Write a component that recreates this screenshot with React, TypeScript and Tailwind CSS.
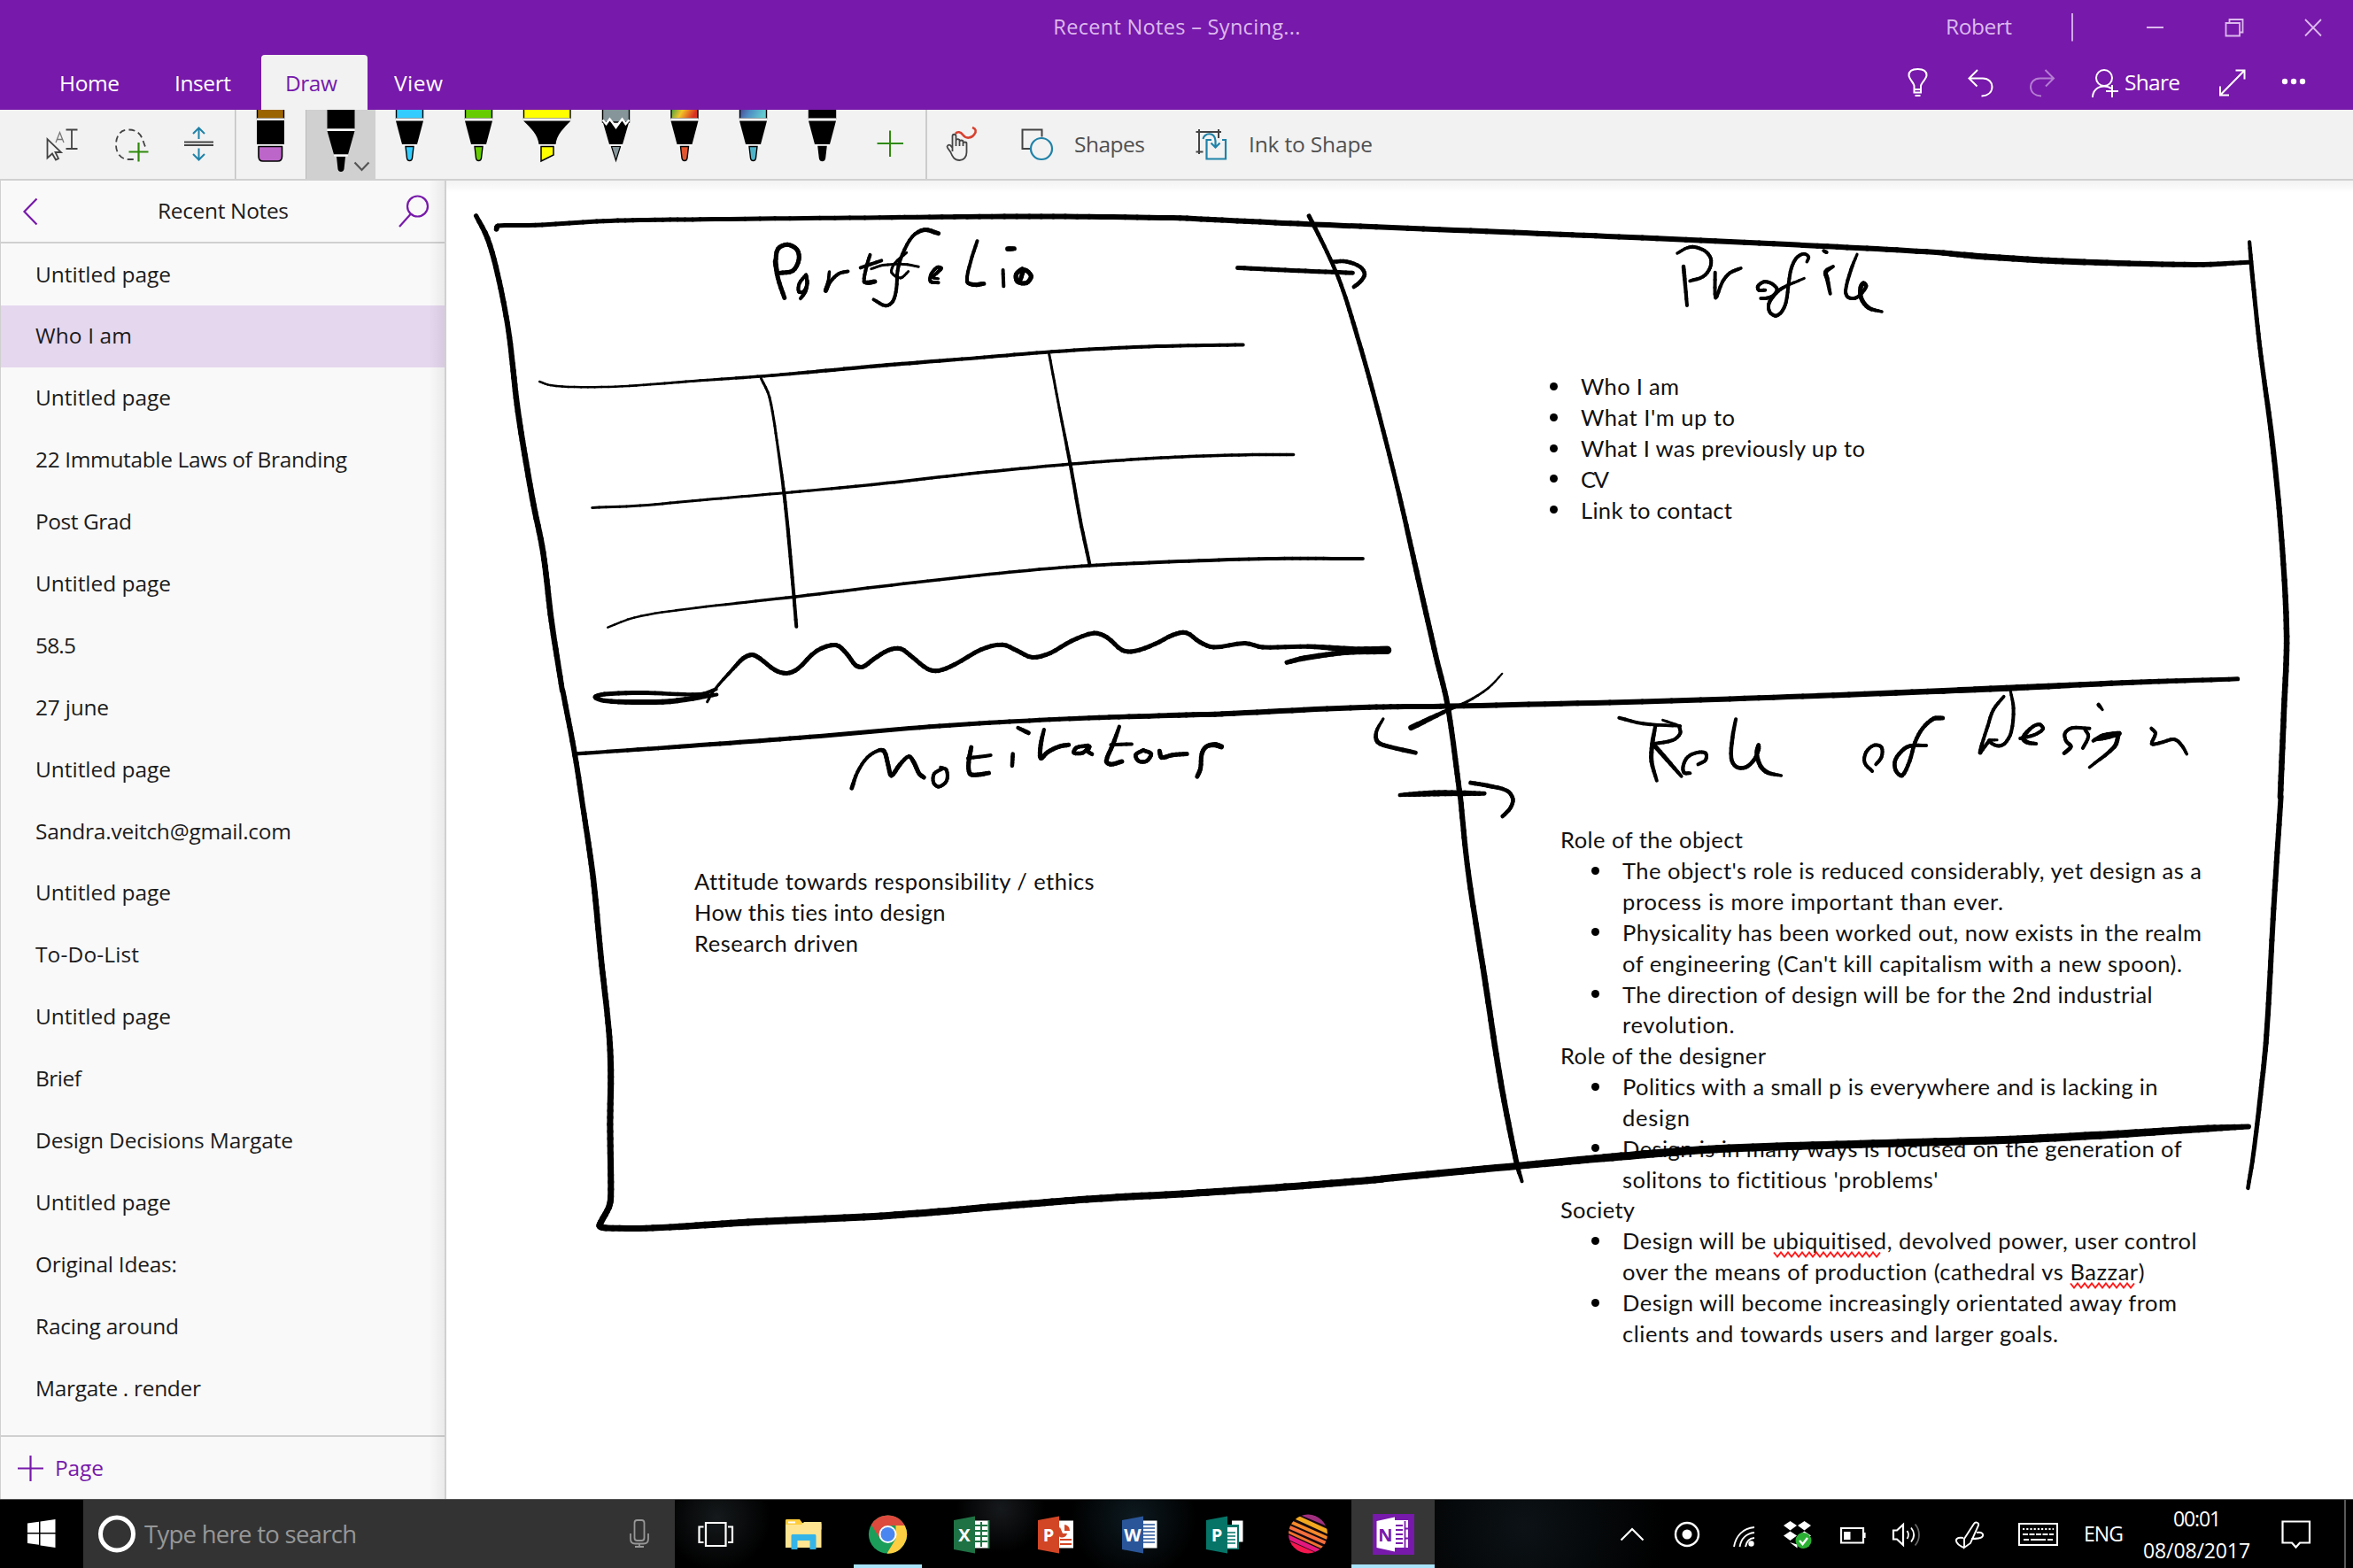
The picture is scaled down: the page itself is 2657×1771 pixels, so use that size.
import React, { useLayoutEffect, useRef } from "react";

/* ---------- helpers ---------- */

// Text whose tracking is adjusted so that it fills a given width.
function Fit({ w, children, className = "" }: { w: number; children: React.ReactNode; className?: string }) {
  const ref = useRef<HTMLSpanElement>(null);
  useLayoutEffect(() => {
    const el = ref.current;
    if (!el) return;
    el.style.letterSpacing = "0px";
    const natural = el.getBoundingClientRect().width;
    const n = (el.textContent ?? "").length;
    if (n > 1) el.style.letterSpacing = `${((w + 2 - natural) / (n - 1)).toFixed(3)}px`;
  }, [w]);
  return (
    <span ref={ref} className={`-ml-px inline-block whitespace-nowrap ${className}`}>
      {children}
    </span>
  );
}

// An icon cell: the viewBox uses window coordinates.
function Cell({ x, y, w, h, children, className = "" }: { x: number; y: number; w: number; h: number; children: React.ReactNode; className?: string }) {
  return (
    <svg width={w} height={h} viewBox={`${x} ${y} ${w} ${h}`} fill="none" className={`block shrink-0 ${className}`}>
      {children}
    </svg>
  );
}

/* ---------- title bar ---------- */

function TitleBar() {
  return (
    <header className="h-[124px] shrink-0 bg-[#7719aa] text-white text-[24.5px]">
      <div className="relative flex h-[62px] items-center justify-end text-[#dcb9ee]">
        <div className="absolute inset-0 flex items-center justify-center pl-[2px] text-[23.5px]">
          <Fit w={277}>Recent Notes – Syncing...</Fit>
        </div>
        <div className="w-[122px] pb-px">
          <Fit w={73}>Robert</Fit>
        </div>
        <Cell x={2320} y={0} w={337} h={62}>
          <g stroke="#dcb9ee" strokeWidth="1.8">
            <path d="M2340 15V46.500M2424 31h19M2513.500 26h15.500v14.500h-15.500zM2517.500 26v-4h15v14.500h-3.500M2603 22l18 18.500M2621 22l-18 18.500" />
          </g>
        </Cell>
      </div>
      <div className="flex h-[62px]">
        <div className="w-[198px] pl-[68px] pt-[14px]">
          <Fit w={66}>Home</Fit>
        </div>
        <div className="w-[97px] pt-[14px]">
          <Fit w={62}>Insert</Fit>
        </div>
        <div className="w-[120px] rounded-t-[4px] bg-[#f2f2f2] pl-[28px] pt-[14px] text-[#7719aa]">
          <Fit w={57}>Draw</Fit>
        </div>
        <div className="pl-[31px] pt-[14px]">
          <Fit w={53}>View</Fit>
        </div>
        <div className="ml-auto flex">
          <Cell x={2130} y={62} w={270} h={62}>
            <g stroke="#fff" strokeWidth="2">
              <path d="M2161.500 101v-4c0-3-6-8-6-12 0-4.500 4-7 10-7s10 2.500 10 7c0 4-6.500 9-6.500 12v4zM2161.500 101h7.500v3.500h-7.500zM2162.500 108h6" />
              <path d="M2233 79l-9.500 9.500 9 9M2223.500 88.500h15.500c7 0 10.500 5 10.500 9.500 0 6-4.500 10-12 10.500" />
              <g stroke="#b57dd3">
                <path d="M2309.500 79l9.500 9.500-9 9M2319 88.500h-15.500c-7 0-10.500 5-10.500 9.500 0 6 4.500 10 12 10.500" />
              </g>
              <circle cx="2376" cy="88" r="9" />
              <path d="M2363 110c0-7 5-12.500 13-12.500 3 0 6 .800 8 2.500M2385 96v14M2378 103h14" />
            </g>
          </Cell>
          <div className="w-[61px] pt-[13px]">
            <Fit w={61}>Share</Fit>
          </div>
          <Cell x={2461} y={62} w={196} h={62}>
            <path d="M2507 107.500L2534.500 79.500M2524.500 79.500h10v10M2507 97.500v10h10" stroke="#fff" strokeWidth="2" />
            <g fill="#fff">
              <circle cx="2580" cy="92" r="3.200" />
              <circle cx="2590" cy="92" r="3.200" />
              <circle cx="2600" cy="92" r="3.200" />
            </g>
          </Cell>
        </div>
      </div>
    </header>
  );
}

/* ---------- drawing ribbon ---------- */

function Pen({ x, c, barrel, tip }: { x: number; c: number; barrel: string; tip: string }) {
  return (
    <Cell x={x} y={124} w={78} h={78}>
      <rect x={c - 15} y={118} width="30" height="16" fill={barrel} stroke="#000" strokeWidth="1.400" />
      <path d={`M${c - 15.500} 133.500h31v3h-31z`} fill="#fff" />
      <path d={`M${c - 15.500} 136.500h31l-7 26.500h-17z`} fill="#000" />
      <path d={`M${c - 8.500} 163h17v2.500h-17z`} fill="#fff" />
      <path d={`M${c - 4.500} 165.500h9l-1.500 13c-.400 4-5.600 4-6 0z`} fill={tip} stroke="#000" strokeWidth="1.400" />
    </Cell>
  );
}

function Ribbon() {
  return (
    <div className="flex h-[80px] shrink-0 border-b-2 border-[#d0d0d0] bg-[#f2f2f2] text-[24.5px] text-[#505050]">
      <Cell x={0} y={124} w={265} h={78}>
        <g stroke="#444" strokeWidth="1.8">
          <path d="M53.500 157v21.500l5.500-5 4 7 3-1.500-3.500-7h6.500z" />
          <path d="M63 161l4.500-11.500 4.500 11.500M64.500 157.500h6" strokeWidth="1.300" stroke="#777" />
          <path d="M81 146.500v21.500M74.500 146.500h13M74.500 168h13" />
          <path d="M164 165.500c-3-6-3.500-19-19-19-10 0-14 8-14 17 0 10 6 16.500 14 16.500h6" strokeDasharray="7 4" />
          <path d="M208 160.500h33M208 164h33" strokeWidth="2" />
        </g>
        <path d="M156.500 161v21.500M145.500 171.500H167.500" stroke="#2f8a0b" strokeWidth="2.200" />
        <path d="M224.500 157v-12M218 151l6.500-6.500 6.500 6.500M224.500 167.500v12M218 174l6.500 6.500 6.500-6.500" stroke="#1f82a8" strokeWidth="2" />
      </Cell>
      <Cell x={265} y={124} w={80} h={78}>
        <path d="M265.700 124v78" stroke="#c2c2c2" strokeWidth="1.600" />
        <rect x="290.500" y="118" width="30" height="16" fill="#9b6400" stroke="#000" strokeWidth="1.400" />
        <path d="M290 136h31v27h-31z" fill="#000" />
        <path d="M290 133.500h31v2.500h-31zM290 163h31v2.500h-31z" fill="#fff" />
        <path d="M292 165.500h26.500v11c0 4-2 5.500-5 5.500h-16.500c-3 0-5-1.500-5-5.500z" fill="#bd66c9" stroke="#000" strokeWidth="1.600" />
      </Cell>
      <Cell x={345} y={124} w={79} h={78} className="bg-[#d0d0d0]">
        <path d="M345.500 124v78" stroke="#bbb" />
        <path d="M369.500 124h31v21.500h-31zM369.500 148h31l-7.500 26.500h-16zM380 177h10l-1.500 14c-.500 4-6.500 4-7 0z" fill="#000" />
        <path d="M369.500 145.500h31v2.500h-31zM377 174.500h16v2h-16z" fill="#fff" />
        <path d="M400.500 183.500l8 8.500 8-8.500" stroke="#555" strokeWidth="2.200" />
      </Cell>
      <Pen x={424} c={462.500} barrel="#33ccff" tip="#33ccff" />
      <Pen x={502} c={540.500} barrel="#66cc00" tip="#66cc00" />
      <Cell x={580} y={124} w={77} h={78}>
        <rect x="591.500" y="118" width="52.500" height="16" fill="#ffff00" stroke="#000" strokeWidth="1.400" />
        <path d="M591 133.500h53.500v3h-53.500z" fill="#fff" />
        <path d="M591 136.500h53.500c-8 8-16 16-17 26.500h-19c-1-10.500-9-18.500-17.500-26.500z" fill="#000" />
        <path d="M608 163h20v2.500h-20z" fill="#fff" />
        <path d="M611 165.500h14v9.500l-14 7z" fill="#ffff00" stroke="#000" strokeWidth="1.500" />
      </Cell>
      <Cell x={657} y={124} w={77} h={78}>
        <path d="M680.500 120h30v18h-30z" fill="#859599" stroke="#000" strokeWidth="1.400" />
        <path d="M680.500 137l3.500 2.500 4-4 3.500 4 4 4 4-4 3.500-4 4 4 3.500-2.500-7.500 26h-15z" fill="#000" />
        <path d="M680.500 135.500l4 4.500 4-5.500 3.500 4.500 3.500 5 3.500-5 3.500-4.500 4 5.500 4-4.500" stroke="#fff" strokeWidth="2.400" />
        <path d="M687.500 163h16v2.500h-16z" fill="#fff" />
        <path d="M690.500 165.500h10l-5 16z" fill="#859599" stroke="#000" strokeWidth="1.200" />
      </Cell>
      <svg width="0" height="0" className="absolute">
        <defs>
          <linearGradient id="rainbow" x1="0" y1="0" x2="1" y2=".3">
            <stop offset="0" stopColor="#1f9a48" />
            <stop offset=".5" stopColor="#f3c52b" />
            <stop offset="1" stopColor="#d9301f" />
          </linearGradient>
          <linearGradient id="galaxy" x1="0" y1="0" x2="1" y2=".3">
            <stop offset="0" stopColor="#4b3a86" />
            <stop offset=".5" stopColor="#4f8fc4" />
            <stop offset="1" stopColor="#63c9cf" />
          </linearGradient>
        </defs>
      </svg>
      <Pen x={734} c={773} barrel="url(#rainbow)" tip="#e2562f" />
      <Pen x={812} c={850.500} barrel="url(#galaxy)" tip="#4fb3c8" />
      <Pen x={890} c={928.500} barrel="#000" tip="#000" />
      <Cell x={968} y={124} w={246} h={78}>
        <path d="M1005 147.500v29.500M990.500 162h29.500" stroke="#2f8a0b" strokeWidth="2" />
        <path d="M1046 124v78" stroke="#c2c2c2" strokeWidth="1.600" />
        <path d="M1079 151c2-3 6-2 8 1 4 5.500 10 4 13 0 3-4 2-6.500-2-8" stroke="#d8412f" strokeWidth="2.600" />
        <path d="M1075.500 171v-17c0-3 4-3 4 0v11M1079.500 165v-6c0-2.500 4-2.500 4 0v6M1083.500 160c0-2 4-2 4 0v5M1087.500 162c0-2 4-2 4 0v10c0 5-3 9-8 9-6 0-8-4-10-9l-3.500-5c-1.500-2 1-4 3-3l2.500 3" stroke="#444" strokeWidth="1.8" />
        <path d="M1163 168h-8.500v-21.500h22v8" stroke="#444" strokeWidth="2" />
        <circle cx="1176" cy="168" r="12" stroke="#1f82a8" strokeWidth="2.200" />
      </Cell>
      <div className="w-[136px] pt-[21px]">
        <Fit w={78}>Shapes</Fit>
      </div>
      <Cell x={1350} y={124} w={61} h={78}>
        <path d="M1354 146v28M1350.500 149h28.500M1376 146v10M1350.500 171.500h8" stroke="#444" strokeWidth="2" />
        <path d="M1368 158h-5.500v21.500h21.500v-21.500h-4" stroke="#1f82a8" strokeWidth="2.200" />
        <path d="M1358.500 157c1-7 13-9 14 2v7M1367.500 161.500l5 5 5-5" stroke="#1f82a8" strokeWidth="2.200" />
      </Cell>
      <div className="pt-[21px]">
        <Fit w={138}>Ink to Shape</Fit>
      </div>
    </div>
  );
}

/* ---------- page list ---------- */

const pages: [string, number][] = [
  ["Untitled page", 151],
  ["Who I am", 107],
  ["Untitled page", 151],
  ["22 Immutable Laws of Branding", 350],
  ["Post Grad", 107],
  ["Untitled page", 151],
  ["58.5", 44],
  ["27 june", 81],
  ["Untitled page", 151],
  ["Sandra.veitch@gmail.com", 287],
  ["Untitled page", 151],
  ["To-Do-List", 115],
  ["Untitled page", 151],
  ["Brief", 50],
  ["Design Decisions Margate", 289],
  ["Untitled page", 151],
  ["Original Ideas:", 158],
  ["Racing around", 160],
  ["Margate . render", 185],
];

function Sidebar() {
  return (
    <aside className="relative flex w-[504px] shrink-0 flex-col border-l border-r-2 border-[#d0d0d0] bg-[#f9f9f9] text-[24.5px] text-[#1c1c1c]">
      <div className="flex h-[71px] items-center border-b-2 border-[#d0d0d0]">
        <Cell x={1} y={206} w={178} h={66}>
          <path d="M41.500 224.500L27.500 239l14 14.500" stroke="#7719aa" strokeWidth="2.200" />
        </Cell>
        <div className="w-[260px] pb-px">
          <Fit w={146}>Recent Notes</Fit>
        </div>
        <Cell x={439} y={206} w={60} h={66}>
          <path d="M463.500 242L451 256" stroke="#7719aa" strokeWidth="2.200" />
          <circle cx="471.500" cy="233" r="11.500" stroke="#7719aa" strokeWidth="2.200" />
        </Cell>
      </div>
      <ul className="flex-1">
        {pages.map(([name, w], i) => (
          <li key={i} className={`flex h-[69.9px] items-center pl-[40px] ${i === 1 ? "bg-[#e5d7ee]" : ""}`}>
            <Fit w={w}>{name}</Fit>
          </li>
        ))}
      </ul>
      <div className="flex h-[72px] items-center border-t-2 border-[#d0d0d0] pl-[19px] text-[#7719aa]">
        <svg width="29" height="29" viewBox="0 0 29 29" className="mr-[14px]">
          <path d="M14.500 0v29M0 14.500h29" stroke="#7719aa" strokeWidth="2.200" />
        </svg>
        <Fit w={53}>Page</Fit>
      </div>
      <div className="absolute inset-y-0 right-0 w-[18px] bg-linear-to-l from-black/6 to-transparent" />
    </aside>
  );
}

/* ---------- typed notes ---------- */

function Line({ w, bullet, indent, children }: { w: number; bullet?: boolean; indent?: boolean; children: React.ReactNode }) {
  return (
    <div className="flex h-[34.85px] items-center">
      {(bullet || indent) && (
        <span className="flex w-[70px] shrink-0 items-center pl-[34px]">{bullet && <span className="size-[9px] rounded-full bg-black" />}</span>
      )}
      <Fit w={w}>{children}</Fit>
    </div>
  );
}

function Misspelt({ children, w }: { children: React.ReactNode; w: number }) {
  const teeth = Math.floor(w / 8);
  return (
    <span className="relative">
      {children}
      <svg width={teeth * 8 + 2} height="9" className="absolute left-0 top-[27px]" fill="none">
        <path d={"M1 1.500" + "l4 5l4 -5".repeat(teeth)} stroke="#ff1a1a" strokeWidth="2" />
      </svg>
    </span>
  );
}

function Notes() {
  return (
    <div className="font-['Lato',sans-serif] text-[25.5px] text-[#111]">
      <div className="absolute left-[1212px] top-[215px]">
        <Line bullet w={109}>Who I am</Line>
        <Line bullet w={172}>What I'm up to</Line>
        <Line bullet w={319}>What I was previously up to</Line>
        <Line bullet w={30}>CV</Line>
        <Line bullet w={169}>Link to contact</Line>
      </div>
      <div className="absolute left-[281px] top-[774px]">
        <Line w={449}>Attitude towards responsibility / ethics</Line>
        <Line w={282}>How this ties into design</Line>
        <Line w={183}>Research driven</Line>
      </div>
      <div className="absolute left-[1259px] top-[727px]">
        <Line w={204}>Role of the object</Line>
        <Line bullet w={652}>The object's role is reduced considerably, yet design as a</Line>
        <Line indent w={428}>process is more important than ever.</Line>
        <Line bullet w={652}>Physicality has been worked out, now exists in the realm</Line>
        <Line indent w={630}>of engineering (Can't kill capitalism with a new spoon).</Line>
        <Line bullet w={597}>The direction of design will be for the 2nd industrial</Line>
        <Line indent w={125}>revolution.</Line>
        <Line w={230}>Role of the designer</Line>
        <Line bullet w={603}>Politics with a small p is everywhere and is lacking in</Line>
        <Line indent w={74}>design</Line>
        <Line bullet w={630}>Design is in many ways is focused on the generation of</Line>
        <Line indent w={355}>solitons to fictitious 'problems'</Line>
        <Line w={82}>Society</Line>
        <Line bullet w={647}>
          Design will be <Misspelt w={127}>ubiquitised</Misspelt>, devolved power, user control
        </Line>
        <Line indent w={588}>
          over the means of production (cathedral vs <Misspelt w={74}>Bazzar</Misspelt>)
        </Line>
        <Line bullet w={624}>Design will become increasingly orientated away from</Line>
        <Line indent w={490}>clients and towards users and larger goals.</Line>
      </div>
    </div>
  );
}

/* ---------- ink ---------- */

// Strokes are "x,y,width" lists; the width carries on until it is given again.
type Sheet = { x: number; y: number; sx: number; sy: number; strokes: string[] };

const sheets: Sheet[] = [
  {
    x: 520, y: 220, sx: 1.479, sy: 2.45,
    strokes: [
      "26,58,5 45,120,6 62,220 80,375 96,600,6.5 120,840 138,990 152,1180 170,1372,6",
      "60,95,6 62,86,5 125,84 250,72 400,68 700,63 950,60,6 1190,64 1272,70",
      "192,1547,4 400,1523,5 600,1498 800,1470 1000,1451 1200,1440,6 1272,1437",
      "526,188,5 530,150 546,138 562,152 565,180 555,210 532,217",
      "526,185,6 530,230,5 541,285",
      "577,222,4 566,245 565,268 573,268 579,245 577,222 579,245 576,268 568,287",
      "616,213,3.5 614,240 610,265,5 618,240,4 632,218 647,212",
      "684,166,4 678,200 674,240 682,243,5 692,240",
      "668,202,4 703,182",
      "798,107,5 775,97 755,115,4 738,165 730,210 728,260 722,295 710,307 690,290",
      "686,205,3 705,195 740,192 765,199",
      "745,160,3 725,190 720,215 735,230 748,212",
      "798,232,3 789,229 797,214,4 803,203 796,201 786,220 785,240 798,243",
      "863,128,4 852,185 846,240 858,249,5 874,246",
      "906,208,4 907,253",
      "914,150,6 925,149,5",
      "938,205,5 928,220 930,240 945,244 953,225 942,208 935,235",
      "1298,202,5 1400,210 1490,216",
      "1458,185,4.5 1480,185 1503,200 1510,220 1503,240 1492,255",
      "132,517,2.5 150,527 190,532 270,530 400,514,3 520,500,3.5 700,473,4.5 850,453,4 1000,433 1150,420 1307,415",
      "220,866,3 300,860 400,845 540,825 700,800,3.5 850,772 1020,745 1170,728 1300,720 1391,719",
      "246,1197,2.5 290,1170 360,1150 560,1112,3.5 800,1065 1000,1032 1150,1018,4 1350,1007 1507,1007",
      "502,508,3 516,560 530,700 542,850,4 552,1020 561,1195",
      "983,440,3 1000,590 1020,760,4 1035,900 1051,1025",
      "412,1403,3 424,1370 455,1312,4 472,1283,5 487,1273 500,1283 525,1315 545,1324 563,1312 595,1262 627,1246 645,1270 660,1302 672,1306 690,1285 715,1260 735,1256 755,1280 780,1312 798,1317 825,1300 870,1258 905,1245 930,1262 955,1280 985,1268 1020,1235 1058,1213 1080,1225 1105,1260 1125,1263 1160,1243 1190,1218 1212,1212 1235,1238 1258,1252 1310,1241 1340,1252 1415,1250,5 1500,1259,7 1548,1260,9",
      "1380,1294,5 1410,1282,6 1480,1266,6 1548,1260,9",
      "427,1368,4 400,1382 300,1378,5 240,1382 225,1390 240,1400 300,1404,6 350,1402 400,1390 428,1383,4",
    ],
  },
  {
    x: 1380, y: 220, sx: 1.2645, sy: 2.306,
    strokes: [
      "0,66,6 130,77 400,97 600,112 850,133 1020,150 1080,160,7 1200,173 1390,182,6 1465,176,5",
      "124,55,5 150,150,4.5 170,235 190,350,5 215,510 250,760 280,1000,6 305,1200 322,1330 340,1568",
      "1467,123,4 1470,190,5 1482,400 1500,650,6 1513,900 1520,1150,6.5 1516,1350 1511,1568",
      "0,1352,6 200,1335 322,1332 600,1320 850,1305 1120,1285,7 1300,1270,6 1450,1261,5",
      "400,1247,2 380,1285,2.5 350,1320,3 325,1340,4 270,1388,6.5",
      "230,1365,3 220,1400,4 222,1425,5 240,1438 276,1453",
    ],
  },
  {
    x: 1880, y: 265, sx: 3, sy: 3,
    strokes: [
      "63,108,4.5 67,150 75,240,4",
      "42,63,3.5 75,45 100,42,4 135,55 155,80 153,112 130,142 85,157",
      "170,128,4 172,214 195,160 220,130 257,114",
      "340,188,4 318,188 315,175 335,160 360,165 380,185 368,206 345,215 325,216",
      "481,92,3.5 487,75 470,65 445,80,4 428,115 420,160 410,230 395,262 375,275 355,262 352,235 370,205,4.5 400,180,4 472,148,3",
      "570,108,3.5 545,126,5 550,150 560,200,4",
      "538,55,4 548,60",
      "651,67,3 630,120,4 612,190 620,212 645,215 665,200 682,175 672,165,5 663,180 665,215 690,248 735,261,3.5",
    ],
  },
  {
    x: 1830, y: 790, sx: 2.376, sy: 3,
    strokes: [
      "-4,62,4 60,82 160,90,3.5",
      "113,70,3 160,90",
      "93,92,4 85,150,5 83,210 97,275,4",
      "157,90,4 160,115 140,138 90,150",
      "88,152,5 125,205 163,260,4",
      "186,250,4 170,248 168,225 180,195 205,180 228,182 228,205 208,220",
      "309,67,4 300,130,4.5 297,200 310,228 335,230 358,205 370,170 370,155 365,180 375,225,5 395,248 431,258,3.5",
      "675,243,4 655,215 658,180 680,155 700,162 700,195 685,220",
      "864,63,5 840,65 810,98,4.5 790,145 775,210 755,258 738,240 737,205 760,168 780,157 820,156,4",
      "1028,-10,3.5 1000,35,4 985,90 970,150 965,180,5",
      "1046,-29,3 1054,30,4 1048,110 1030,150 1010,157 988,140 1010,137,3",
      "990,138,4 965,180",
      "1072,132,4 1110,120 1133,100 1125,85 1105,93 1080,130,5 1090,145 1115,150,4",
      "1258,98,4 1210,97 1192,115 1195,140 1208,160,4.5 1190,182",
      "1245,100,4 1255,125 1240,165",
      "1282,18,5 1293,35,3",
      "1268,140,4 1295,122,5 1338,115 1300,130 1272,136,4",
      "1336,118,5 1325,160 1258,230,3.5",
      "1424,98,4 1435,115 1425,150 1445,148 1485,135 1505,155 1519,185,3.5",
    ],
  },
  {
    x: 1560, y: 900, sx: 1.479, sy: 2.376,
    strokes: [
      "0,1025,8 230,990 400,965,9 560,945 800,932 1050,920 1200,908 1380,890,8 1448,885,6",
      "1502,0,6 1490,300 1478,640 1468,800,5.5 1456,960,5 1447,1050,4.5",
    ],
  },
  {
    x: 620, y: 780, sx: 1.3635, sy: 2.45,
    strokes: [
      "21,0,6 40,180 52,320 68,520,6.5 80,740 92,940 95,1050,7 94,1200 95,1400 92,1430 80,1470 78,1482,7 88,1487 160,1487 320,1470,8 500,1455 600,1442 720,1423 850,1405 1000,1390 1160,1370 1282,1352",
      "1403,294,6 1415,500 1440,790,6.5 1465,1080 1490,1310,6 1498,1358,4",
      "1310,289,4 1340,286,6 1370,284,7 1410,284,6.5 1440,285,5",
      "1419,255,5 1445,263 1475,277,4.5 1484,300 1480,325 1468,348",
      "466,270,5 475,225,4 490,185 508,165 516,168,5 522,205 527,235 540,205 554,182,4 562,200,5 570,230 577,240",
      "607,215,4 593,230 592,255 600,266 612,250 612,220 603,213",
      "650,157,5 646,200 648,230 660,233 677,228",
      "645,187,4 680,179",
      "714,175,4.5 713,208",
      "722,103,4 738,117,5",
      "762,108,4 757,150,5 757,187 768,170 785,155 800,150",
      "830,152,4.5 812,158 808,172 822,172 832,155 830,168 836,176",
      "878,100,4 868,150,5 858,195 865,204 882,196",
      "865,150,4 897,148",
      "915,165,4.5 903,178 908,195 920,195 927,175 915,165",
      "940,167,5 943,185 960,178 982,175",
      "1035,155,6 1025,150 1012,155,5 1005,175 1003,215 998,238",
    ],
  },
];

type P = [number, number, number];

function parse(stroke: string, s: Sheet): P[] {
  let w = 4;
  return stroke.split(" ").map((t) => {
    const [x, y, width] = t.split(",").map(Number);
    if (width) w = width;
    return [s.x + x / s.sx, s.y + y / s.sy, w];
  });
}

// Catmull-Rom sampling of a stroke with interpolated nib width.
function sample(pts: P[]): P[] {
  const out: P[] = [pts[0]];
  for (let i = 0; i < pts.length - 1; i++) {
    const p0 = pts[Math.max(0, i - 1)];
    const p1 = pts[i];
    const p2 = pts[i + 1];
    const p3 = pts[Math.min(pts.length - 1, i + 2)];
    const len = Math.hypot(p2[0] - p1[0], p2[1] - p1[1]);
    const k = Math.max(0.001, len);
    const l0 = Math.max(1, Math.hypot(p1[0] - p0[0], p1[1] - p0[1]) + k);
    const l2 = Math.max(1, Math.hypot(p3[0] - p2[0], p3[1] - p2[1]) + k);
    const n = Math.min(12, Math.max(4, Math.round(len / 8)));
    for (let j = 1; j <= n; j++) {
      const t = j / n;
      const h1 = 2 * t ** 3 - 3 * t ** 2 + 1;
      const h2 = t ** 3 - 2 * t ** 2 + t;
      const h3 = -2 * t ** 3 + 3 * t ** 2;
      const h4 = t ** 3 - t ** 2;
      const at = (a: 0 | 1) => h1 * p1[a] + (h2 * k * (p2[a] - p0[a])) / l0 + h3 * p2[a] + (h4 * k * (p3[a] - p1[a])) / l2;
      out.push([at(0), at(1), p1[2] + (p2[2] - p1[2]) * t]);
    }
  }
  return out;
}

function Ink() {
  return (
    <svg width="2153" height="1489" viewBox="504 204 2153 1489" className="absolute inset-0" stroke="#000" strokeLinecap="round" role="img" aria-label="Portfolio, Profile, Motivators, Role of Design">
      {sheets.map((s, a) =>
        s.strokes.map((st, b) => {
          const pts = sample(parse(st, s));
          return (
            <g key={`${a}-${b}`}>
              {pts.slice(1).map((p, i) => (
                <line key={i} x1={pts[i][0].toFixed(1)} y1={pts[i][1].toFixed(1)} x2={p[0].toFixed(1)} y2={p[1].toFixed(1)} strokeWidth={p[2].toFixed(2)} />
              ))}
            </g>
          );
        })
      )}
    </svg>
  );
}

/* ---------- taskbar ---------- */

function Office({ x, w, bx, color, letter, children }: { x: number; w: number; bx: number; color: string; letter: string; children: React.ReactNode }) {
  return (
    <Cell x={x} y={1693} w={w} h={78}>
      {children}
      <path d={`M${bx} 1716l24-4.500v42l-24-4.500z`} fill={color} />
      <text x={bx + 12} y="1740" textAnchor="middle" fill="#fff" fontSize="20" fontWeight="700" fontFamily="Open Sans">
        {letter}
      </text>
    </Cell>
  );
}

function Taskbar() {
  return (
    <footer className="flex h-[78px] shrink-0 border-t border-[#555] bg-black bg-[radial-gradient(circle_at_810px_20px,#15191b_0,transparent_60px),radial-gradient(circle_at_1130px_10px,#16191c_0,transparent_50px),radial-gradient(circle_at_1280px_20px,#0d1a20_0,transparent_70px),radial-gradient(circle_at_1720px_30px,#0c1216_0,transparent_160px)] text-[23px] text-white">
      <Cell x={0} y={1694} w={94} h={77} className="bg-black">
        <path d="M31 1720.500l13-1.800v12.300h-13zM45.500 1718.500l17-2.500v15h-17zM31 1732.500h13v12.300l-13-1.800zM45.500 1732.500h17v15.500l-17-2.500z" fill="#fff" />
      </Cell>
      <div className="flex w-[668px] items-center bg-[#333] text-[27.5px] text-[#979797]">
        <Cell x={94} y={1694} w={70} h={77}>
          <circle cx="132" cy="1732.500" r="18.500" stroke="#fff" strokeWidth="5" />
        </Cell>
        <div className="w-[536px] pt-px">
          <Fit w={238}>Type here to search</Fit>
        </div>
        <Cell x={700} y={1694} w={62} h={77}>
          <path d="M716.500 1720c0-2 1-3 3-3h5c2 0 3 1 3 3v17c0 2-1 3-3 3h-5c-2 0-3-1-3-3zM712 1732v6c0 4 2 5.500 5 5.500h10c3 0 5-1.500 5-5.500v-6M722 1743.500v3.500M717 1747h10" stroke="#979797" strokeWidth="1.8" />
        </Cell>
      </div>
      <Cell x={762} y={1693} w={95} h={78}>
        <path d="M797 1719h22.500v26h-22.500zM794.500 1723.500h-5v17.500h5M822 1723.500h5v17.500h-5" stroke="#fff" strokeWidth="2.200" />
      </Cell>
      <Cell x={857} y={1693} w={96} h={78}>
        <path d="M887 1716.500c0-1 .500-1.500 1.500-1.500h14.500l3 4h20c1 0 1.500.500 1.500 1.500v6h-40.500z" fill="#ffcd3c" />
        <path d="M887 1721h18l3-3h19.500v29h-40.500z" fill="#ffe592" />
        <path d="M890 1717.500h8v2h-8z" fill="#fff" />
        <path d="M893.500 1749v-15c0-1.500.500-2 2-2h24c1.500 0 2 .500 2 2v15h-7v-10h-14v10z" fill="#35b4e8" />
      </Cell>
      <Cell x={953} y={1693} w={95} h={78}>
        <circle cx="1002.500" cy="1732" r="21.600" fill="#1b9e5a" />
        <path d="M983.800 1721.200A21.600 21.600 0 0 1 1021.600 1722H1002.500L994 1737z" fill="#dc4a3d" />
        <path d="M1021.600 1722A21.600 21.600 0 0 1 1001.500 1753.600L1011.500 1737V1722z" fill="#fdce42" />
        <circle cx="1002.500" cy="1732" r="10" fill="#fff" />
        <circle cx="1002.500" cy="1732" r="8" fill="#4a86f0" />
        <path d="M964 1766h77v5h-77z" fill="#a9e4fb" />
      </Cell>
      <Office x={1048} w={96} bx={1077} color="#1f7244" letter="X">
        <path d="M1100 1716.500h16.500v31h-16.500z" fill="#fff" />
        <path d="M1100 1722h15M1100 1728h15M1100 1734h15M1100 1740h15M1108 1718v28M1116.500 1716v32" stroke="#1f7244" strokeWidth="2" />
      </Office>
      <Office x={1144} w={95} bx={1172} color="#d24625" letter="P">
        <path d="M1195 1716.500h17v31h-17z" fill="#fff" />
        <path d="M1197 1724a6 6 0 1 0 8 7h-5zM1202 1721v7h6a6.500 6.500 0 0 0-6-7z" fill="#d24625" />
        <path d="M1197 1738h13M1197 1743h13" stroke="#d24625" strokeWidth="2" />
      </Office>
      <Office x={1239} w={96} bx={1267} color="#2a5699" letter="W">
        <path d="M1290 1716.500h16.500v31h-16.500z" fill="#fff" />
        <path d="M1290 1721h14M1290 1725h14M1290 1729h14M1290 1733h14M1290 1737h14M1290 1741h14" stroke="#2a5699" strokeWidth="1.700" />
      </Office>
      <Office x={1335} w={95} bx={1362} color="#067568" letter="P">
        <path d="M1391 1716.500h12.500v24h-12.500z" fill="#fff" />
        <path d="M1385 1721h14v28h-14z" fill="#067568" />
        <path d="M1385 1724h12v23.500h-12z" fill="#fff" />
        <path d="M1386 1730h9M1386 1734h9M1386 1738h9M1386 1742h9" stroke="#067568" strokeWidth="1.700" />
      </Office>
      <Cell x={1430} y={1693} w={96} h={78}>
        <clipPath id="disc">
          <circle cx="1477" cy="1731.500" r="22" />
        </clipPath>
        <circle cx="1477" cy="1731.500" r="22" fill="#160810" />
        <g clipPath="url(#disc)" strokeWidth="3.800">
          <path d="M1466 1706l36 15" stroke="#a0307f" strokeWidth="6" />
          <path d="M1458 1710l46 21" stroke="#f3a91f" strokeWidth="5" />
          <path d="M1453 1716l50 22" stroke="#f58a2c" />
          <path d="M1452 1722l50 22" stroke="#f56f3c" />
          <path d="M1452 1728l50 23" stroke="#f0702f" strokeWidth="3" />
          <path d="M1450 1733l48 22" stroke="#e3187e" strokeWidth="5" />
          <path d="M1452 1742l40 18" stroke="#f5174f" strokeWidth="8" />
        </g>
      </Cell>
      <Cell x={1526} y={1693} w={94} h={78} className="bg-[#363636]">
        <path d="M1550 1709h47v46h-47z" fill="#7719aa" />
        <path d="M1573 1716h17v31h-17z" fill="#fff" />
        <path d="M1576 1722h8M1576 1727h8M1576 1732h8M1576 1737h8M1576 1742h8M1586.500 1717v30M1586.500 1725.500h6M1586.500 1736.500h6" stroke="#7719aa" strokeWidth="1.800" />
        <path d="M1554.500 1717l20.500-4.500v39l-20.500-4.500z" fill="#fff" />
        <text x="1564.500" y="1740" textAnchor="middle" fill="#7719aa" fontSize="20" fontWeight="700" fontFamily="Open Sans">
          N
        </text>
        <path d="M1526 1766h94v5h-94z" fill="#a9e4fb" />
      </Cell>
      <Cell x={1808} y={1693} w={534} h={78} className="ml-[188px]">
        <g stroke="#fff" strokeWidth="2.200">
          <path d="M1830.500 1738.500l12.500-12.500 12.500 12.500" />
          <circle cx="1905" cy="1732" r="13" strokeWidth="2.400" />
          <path d="M1981 1724c-13 1-21 10-23 22M1981 1730c-9 1-15 7-16.500 16M1981 1736c-5 .500-9 4-10 10" strokeWidth="1.900" />
          <path d="M2079 1725h25v16.500h-25zM2105.500 1730v6" />
          <path d="M2138 1727.500h4l7-6.500v23l-7-6.500h-4z" />
          <path d="M2153.500 1728c2 3 2 6 0 9M2158 1724.500c4 5 4 11 0 16" strokeWidth="1.800" />
          <path d="M2162.500 1720.500c6 7 6 17 0 24" stroke="#666" strokeWidth="1.800" />
          <path d="M2218 1737l11-17c2-3 6-1 5 2l-9 20-7 5zM2217 1736c-8-1-9 2-7.500 5 2 4 5 4 8 6M2232 1730c6-1 9 2 6 5-2 2-7 2-12 2" strokeWidth="1.900" />
          <path d="M2280 1720h43v24h-43z" strokeWidth="2" />
          <path d="M2284 1726h35" strokeDasharray="2.200 2" strokeWidth="2" />
          <path d="M2284 1732h35" strokeDasharray="6 1.500" strokeWidth="2" />
          <path d="M2285 1738h6M2293 1738h17M2312 1738h6" strokeWidth="2.200" />
        </g>
        <circle cx="1905" cy="1732" r="5.500" fill="#fff" />
        <circle cx="1977.500" cy="1742.500" r="3.200" fill="#fff" />
        <path d="M2082 1729h7.500v9h-7.500z" fill="#fff" />
        <path d="M2021.500 1717l7.500 5-7.500 5.500-7.500-5.500zM2037.500 1717l7.500 5-7.500 5.500-7.500-5.500zM2021.500 1728.500l7.500 5-7.500 5.500-7.500-5.500zM2037.500 1728.500l7.500 5-7.500 5.500-7.500-5.500zM2021 1741l8.500 2.500v4z" fill="#fff" />
        <circle cx="2036.500" cy="1739" r="9" fill="#2bb034" />
        <path d="M2032 1739l3.500 4 5.500-7" stroke="#fff" strokeWidth="2.400" />
      </Cell>
      <div className="flex w-[68px] items-center pl-[12px]">
        <Fit w={43}>ENG</Fit>
      </div>
      <div className="flex w-[142px] flex-col items-center leading-[36px]">
        <div className="mt-[3px]">
          <Fit w={52}>00:01</Fit>
        </div>
        <Fit w={119}>08/08/2017</Fit>
      </div>
      <Cell x={2552} y={1693} w={105} h={78}>
        <path d="M2577.500 1717.500h30.500v24h-11l-4.500 5-4.500-5h-10.500z" stroke="#fff" strokeWidth="2.200" />
        <path d="M2648 1693v78" stroke="#777" strokeWidth="1.500" />
      </Cell>
    </footer>
  );
}

export default function App() {
  return (
    <div className="flex h-[1771px] w-[2657px] flex-col overflow-hidden bg-white font-['Open_Sans',sans-serif]">
      <TitleBar />
      <Ribbon />
      <div className="flex min-h-0 flex-1">
        <Sidebar />
        <main className="relative flex-1 overflow-hidden bg-white">
          <div className="absolute inset-x-0 top-0 h-[14px] bg-linear-to-b from-black/5 to-transparent" />
          <Notes />
          <Ink />
        </main>
      </div>
      <Taskbar />
    </div>
  );
}
